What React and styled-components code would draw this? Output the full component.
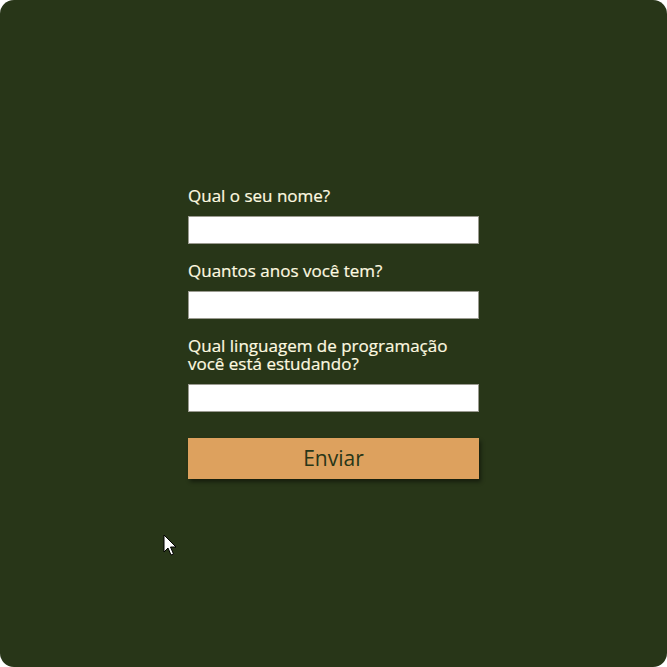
import React from "react";
import styled, { createGlobalStyle } from "styled-components";

const GlobalStyle = createGlobalStyle`
  html, body {
    margin: 0;
    padding: 0;
    background: #ffffff;
  }
  * {
    box-sizing: border-box;
  }
`;

const Screen = styled.div`
  width: 667px;
  height: 667px;
  background: #283618;
  border-radius: 14px;
  display: flex;
  align-items: center;
  justify-content: center;
  position: relative;
  font-family: "Open Sans", "DejaVu Sans", sans-serif;
`;

const Form = styled.form`
  width: 291px;
  margin-bottom: 2px;
  display: flex;
  flex-direction: column;
`;

const Field = styled.div`
  display: flex;
  flex-direction: column;
  margin-bottom: ${(p) => p.$gap || 18}px;
`;

const Label = styled.label`
  color: #fefae0;
  font-size: 17px;
  line-height: 18px;
  margin-bottom: 11px;
  -webkit-text-stroke: 0.2px #fefae0;
`;

const Input = styled.input`
  width: 291px;
  height: 28px;
  border: 1px solid #9a9a90;
  background: #ffffff;
  outline: none;
`;

const Button = styled.button`
  width: 291px;
  height: 41px;
  border: none;
  background: #dda15e;
  color: #283618;
  font-family: inherit;
  font-size: 21px;
  box-shadow: 2px 3px 4px rgba(0, 0, 0, 0.45);
  cursor: pointer;
`;

const Pointer = styled.svg`
  position: absolute;
  left: 163px;
  top: 534px;
`;

const App = () => {
  return (
    <>
      <GlobalStyle />
      <Screen>
        <Form onSubmit={(e) => e.preventDefault()}>
          <Field>
            <Label>Qual o seu nome?</Label>
            <Input type="text" />
          </Field>
          <Field>
            <Label>Quantos anos você tem?</Label>
            <Input type="text" />
          </Field>
          <Field $gap={26}>
            <Label>Qual linguagem de programação você está estudando?</Label>
            <Input type="text" />
          </Field>
          <Button type="submit">Enviar</Button>
        </Form>
        <Pointer width="16" height="24" viewBox="0 0 16 24">
          <path d="M1 1 L1 18 L5 14 L8 21 L10.5 20 L7.5 13 L13 13 Z" fill="#ffffff" stroke="#000000" strokeWidth="1" />
        </Pointer>
      </Screen>
    </>
  );
};

export default App;
